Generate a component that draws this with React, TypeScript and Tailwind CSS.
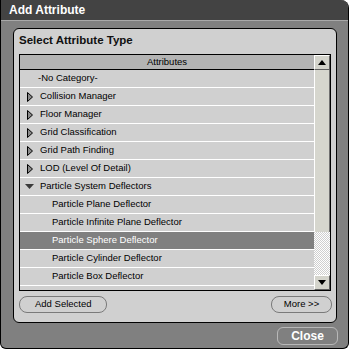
const rows: { label: string; kind: 'plain' | 'closed' | 'open' | 'child'; selected?: boolean }[] = [
  { label: '-No Category-', kind: 'plain' },
  { label: 'Collision Manager', kind: 'closed' },
  { label: 'Floor Manager', kind: 'closed' },
  { label: 'Grid Classification', kind: 'closed' },
  { label: 'Grid Path Finding', kind: 'closed' },
  { label: 'LOD (Level Of Detail)', kind: 'closed' },
  { label: 'Particle System Deflectors', kind: 'open' },
  { label: 'Particle Plane Deflector', kind: 'child' },
  { label: 'Particle Infinite Plane Deflector', kind: 'child' },
  { label: 'Particle Sphere Deflector', kind: 'child', selected: true },
  { label: 'Particle Cylinder Deflector', kind: 'child' },
  { label: 'Particle Box Deflector', kind: 'child' },
  { label: '', kind: 'plain' },
]

const Row = ({ label, kind, selected }: (typeof rows)[number]) => {
  return (
    <div
      className={`flex h-[18px] shrink-0 items-center border-b border-white text-[9.5px] ${
        selected ? 'bg-[#808080] text-white' : 'bg-[#d0d0d0] text-black'
      }`}
    >
      {kind === 'plain' && <span className="pl-[18px]">{label}</span>}
      {kind === 'closed' && (
        <>
          <svg width="7" height="10" viewBox="0 0 7 10" className="ml-[7px] mr-[6px]">
            <polygon points="0.5,0.5 5.5,5 0.5,9.5" fill="#8a8a8a" stroke="#000" strokeWidth="1" />
          </svg>
          <span>{label}</span>
        </>
      )}
      {kind === 'open' && (
        <>
          <svg width="10" height="6" viewBox="0 0 10 6" className="ml-[5px] mr-[5px]">
            <polygon points="0,0 9,0 4.5,5" fill="#3a3a3a" />
          </svg>
          <span>{label}</span>
        </>
      )}
      {kind === 'child' && <span className="pl-[32px]">{label}</span>}
    </div>
  )
}

const ScrollButton = ({ up }: { up?: boolean }) => (
  <div className="flex h-[15px] shrink-0 items-center justify-center border-t border-l border-t-white border-l-white border-r border-b border-r-[#606060] border-b-[#606060] bg-[#d4d4cc]">
    <svg width="8" height="5" viewBox="0 0 8 5">
      {up ? <polygon points="0,5 8,5 4,0" fill="#000" /> : <polygon points="0,0 8,0 4,5" fill="#000" />}
    </svg>
  </div>
)

export default function App() {
  return (
    <div className="h-[349px] w-[349px] bg-white font-['Liberation_Sans',Arial,sans-serif]">
      <div className="flex h-[349px] w-[349px] flex-col overflow-hidden rounded-tr-[8px] rounded-b-[6px] border-r border-b border-l border-black bg-[#808080]">
        <div className="flex h-[20px] shrink-0 items-center bg-[#434343] pl-[8px] text-[12px] font-bold text-white">
          Add Attribute
        </div>
        <div className="h-px shrink-0 bg-[#a8a8a8]" />

        <div className="ml-[12px] mt-[7px] flex h-[295px] w-[324px] flex-col rounded-[6px] border border-black bg-[#d0d0d0] px-[5px]">
          <div className="mt-[4px] h-[14px] text-[11.5px] font-bold leading-[14px] text-[#111]">Select Attribute Type</div>

          <div className="mt-[7px] flex h-[237px] w-[312px] border border-black">
            <div className="flex w-[294px] flex-col overflow-hidden">
              <div className="flex h-[15px] shrink-0 items-center justify-center border-b border-black bg-[#b4b4b4] text-[9.5px] text-black">
                Attributes
              </div>
              {rows.map((r, i) => (
                <Row key={i} {...r} />
              ))}
            </div>
            <div className="flex w-[16px] flex-col">
              <ScrollButton up />
              <div className="h-[162px] shrink-0 border-l border-l-white border-r border-r-[#707070] bg-[#d6d6ce]" />
              <div className="flex-1 bg-[image:repeating-conic-gradient(#ffffff_0%_25%,#cfcfcf_0%_50%)] bg-[length:2px_2px]" />
              <ScrollButton />
            </div>
          </div>

          <div className="mt-[5px] flex w-[313px] items-center justify-between">
            <button className="flex h-[17px] w-[88px] items-center rounded-[8px] border border-[#7a7a7a] pl-[15px] text-[9.5px] text-black">
              Add Selected
            </button>
            <button className="flex h-[17px] w-[61px] items-center justify-center rounded-[8px] border border-[#7a7a7a] text-[9.5px] text-black">
              More &gt;&gt;
            </button>
          </div>
        </div>

        <div className="mt-[4px] flex justify-end pr-[10px]">
          <button className="flex h-[18px] w-[61px] items-center justify-center rounded-[6px] border border-[#b8b8b8] text-[12px] font-bold text-white">
            Close
          </button>
        </div>
      </div>
    </div>
  )
}
